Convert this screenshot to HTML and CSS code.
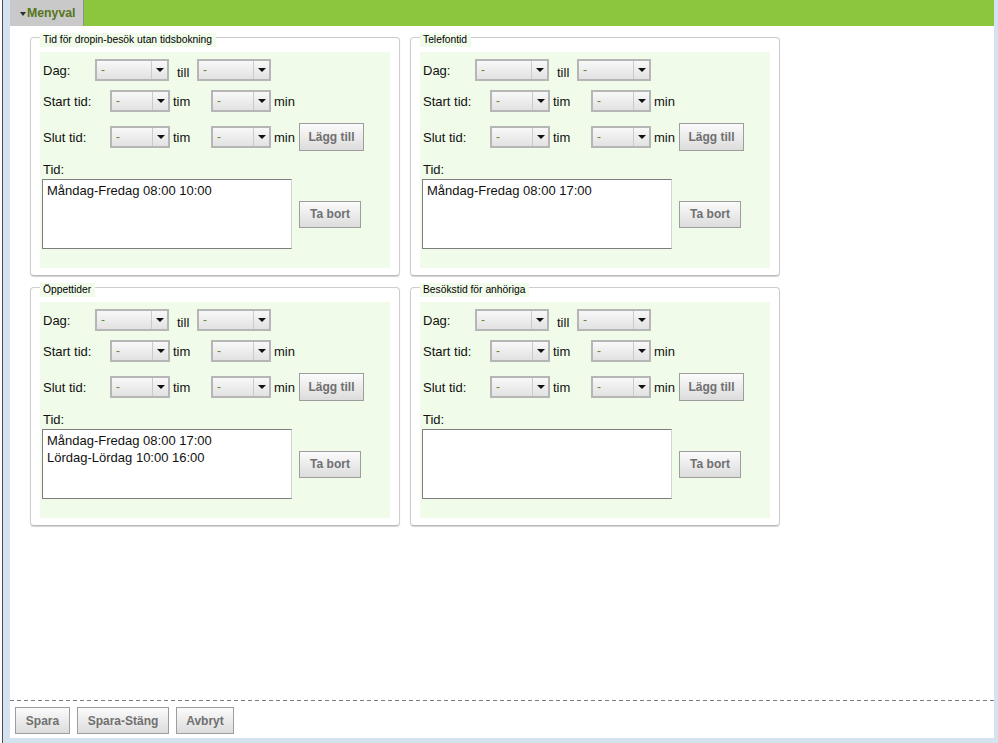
FILE: index.html
```html
<!DOCTYPE html>
<html lang="sv">
<head>
<meta charset="utf-8">
<title>Tider</title>
<link rel="stylesheet" href="styles.css">
</head>
<body>
<div class="frame">
  <div class="window">
    <div class="page">
      <div class="topbar">
        <div class="tab"><span class="caret"></span>Menyval</div>
      </div>
      <div class="content">
        <div class="grid">

          <div class="panel">
            <div class="legend">Tid för dropin-besök utan tidsbokning</div>
            <div class="box">
              <div class="row row-dag">
                <span class="lbl lbl-dag">Dag:</span>
                <div class="sel sel-wide"><span class="val">-</span><span class="arr"></span></div>
                <span class="till">till</span>
                <div class="sel sel-wide"><span class="val">-</span><span class="arr"></span></div>
              </div>
              <div class="row row-time">
                <span class="lbl lbl-time">Start tid:</span>
                <div class="sel"><span class="val">-</span><span class="arr"></span></div>
                <span class="unit unit-tim">tim</span>
                <div class="sel"><span class="val">-</span><span class="arr"></span></div>
                <span class="unit unit-min">min</span>
              </div>
              <div class="row row-time row-slut">
                <span class="lbl lbl-time">Slut tid:</span>
                <div class="sel"><span class="val">-</span><span class="arr"></span></div>
                <span class="unit unit-tim">tim</span>
                <div class="sel"><span class="val">-</span><span class="arr"></span></div>
                <span class="unit unit-min">min</span>
                <button class="btn btn-add">Lägg till</button>
              </div>
              <div class="lbl lbl-tid">Tid:</div>
              <div class="row row-list">
                <div class="list"><div>Måndag-Fredag 08:00 10:00</div></div>
                <button class="btn btn-del">Ta bort</button>
              </div>
            </div>
          </div>

          <div class="panel">
            <div class="legend">Telefontid</div>
            <div class="box">
              <div class="row row-dag">
                <span class="lbl lbl-dag">Dag:</span>
                <div class="sel sel-wide"><span class="val">-</span><span class="arr"></span></div>
                <span class="till">till</span>
                <div class="sel sel-wide"><span class="val">-</span><span class="arr"></span></div>
              </div>
              <div class="row row-time">
                <span class="lbl lbl-time">Start tid:</span>
                <div class="sel"><span class="val">-</span><span class="arr"></span></div>
                <span class="unit unit-tim">tim</span>
                <div class="sel"><span class="val">-</span><span class="arr"></span></div>
                <span class="unit unit-min">min</span>
              </div>
              <div class="row row-time row-slut">
                <span class="lbl lbl-time">Slut tid:</span>
                <div class="sel"><span class="val">-</span><span class="arr"></span></div>
                <span class="unit unit-tim">tim</span>
                <div class="sel"><span class="val">-</span><span class="arr"></span></div>
                <span class="unit unit-min">min</span>
                <button class="btn btn-add">Lägg till</button>
              </div>
              <div class="lbl lbl-tid">Tid:</div>
              <div class="row row-list">
                <div class="list"><div>Måndag-Fredag 08:00 17:00</div></div>
                <button class="btn btn-del">Ta bort</button>
              </div>
            </div>
          </div>

          <div class="panel">
            <div class="legend">Öppettider</div>
            <div class="box">
              <div class="row row-dag">
                <span class="lbl lbl-dag">Dag:</span>
                <div class="sel sel-wide"><span class="val">-</span><span class="arr"></span></div>
                <span class="till">till</span>
                <div class="sel sel-wide"><span class="val">-</span><span class="arr"></span></div>
              </div>
              <div class="row row-time">
                <span class="lbl lbl-time">Start tid:</span>
                <div class="sel"><span class="val">-</span><span class="arr"></span></div>
                <span class="unit unit-tim">tim</span>
                <div class="sel"><span class="val">-</span><span class="arr"></span></div>
                <span class="unit unit-min">min</span>
              </div>
              <div class="row row-time row-slut">
                <span class="lbl lbl-time">Slut tid:</span>
                <div class="sel"><span class="val">-</span><span class="arr"></span></div>
                <span class="unit unit-tim">tim</span>
                <div class="sel"><span class="val">-</span><span class="arr"></span></div>
                <span class="unit unit-min">min</span>
                <button class="btn btn-add">Lägg till</button>
              </div>
              <div class="lbl lbl-tid">Tid:</div>
              <div class="row row-list">
                <div class="list"><div>Måndag-Fredag 08:00 17:00</div><div>Lördag-Lördag 10:00 16:00</div></div>
                <button class="btn btn-del">Ta bort</button>
              </div>
            </div>
          </div>

          <div class="panel">
            <div class="legend">Besökstid för anhöriga</div>
            <div class="box">
              <div class="row row-dag">
                <span class="lbl lbl-dag">Dag:</span>
                <div class="sel sel-wide"><span class="val">-</span><span class="arr"></span></div>
                <span class="till">till</span>
                <div class="sel sel-wide"><span class="val">-</span><span class="arr"></span></div>
              </div>
              <div class="row row-time">
                <span class="lbl lbl-time">Start tid:</span>
                <div class="sel"><span class="val">-</span><span class="arr"></span></div>
                <span class="unit unit-tim">tim</span>
                <div class="sel"><span class="val">-</span><span class="arr"></span></div>
                <span class="unit unit-min">min</span>
              </div>
              <div class="row row-time row-slut">
                <span class="lbl lbl-time">Slut tid:</span>
                <div class="sel"><span class="val">-</span><span class="arr"></span></div>
                <span class="unit unit-tim">tim</span>
                <div class="sel"><span class="val">-</span><span class="arr"></span></div>
                <span class="unit unit-min">min</span>
                <button class="btn btn-add">Lägg till</button>
              </div>
              <div class="lbl lbl-tid">Tid:</div>
              <div class="row row-list">
                <div class="list"></div>
                <button class="btn btn-del">Ta bort</button>
              </div>
            </div>
          </div>

        </div>
      </div>
      <div class="dash"></div>
      <div class="footer">
        <button class="btn btn-foot btn-spara">Spara</button>
        <button class="btn btn-foot btn-stang">Spara-Stäng</button>
        <button class="btn btn-foot btn-avbryt">Avbryt</button>
      </div>
    </div>
  </div>
</div>
</body>
</html>
```

FILE: styles.css
```css
* { box-sizing: border-box; }

html, body {
  margin: 0;
  padding: 0;
}

body {
  width: 998px;
  height: 743px;
  overflow: hidden;
  background: #ffffff;
  font-family: "Liberation Sans", Arial, sans-serif;
  font-size: 13px;
  color: #111111;
}

.frame {
  height: 743px;
  padding-left: 2px;
  display: flex;
}

.window {
  flex: 1;
  display: flex;
  border-left: 1px solid #4d4d4d;
  background: #d5e3f1;
  padding: 0 4px 5px 7px;
}

.page {
  flex: 1;
  display: flex;
  flex-direction: column;
  background: #ffffff;
}

/* top bar */
.topbar {
  height: 26px;
  flex: none;
  display: flex;
  background: #8cc63f;
}

.tab {
  width: 74px;
  display: flex;
  align-items: center;
  padding-left: 10px;
  background: #c9c9c9;
  border-right: 1px solid #8f8f8f;
  font-size: 12.3px;
  font-weight: bold;
  color: #56751a;
}

.caret {
  width: 0;
  height: 0;
  border-top: 4px solid #2e2e2e;
  border-left: 3.5px solid transparent;
  border-right: 3.5px solid transparent;
  margin-right: 1px;
  margin-top: 1px;
}

/* content */
.content {
  flex: 1;
  padding: 11px 0 0 20px;
}

.grid {
  display: grid;
  grid-template-columns: 370px 370px;
  column-gap: 10px;
  row-gap: 11px;
}

.panel {
  border: 1px solid #cdcdcd;
  border-bottom-color: #b9b9b9;
  border-radius: 4px;
  padding: 0 9px 7px;
  box-shadow: 0 1px 1px rgba(0, 0, 0, 0.18);
}

.legend {
  display: table;
  margin: -5px 0 5px 0;
  padding: 0 4px 0 3px;
  height: 14px;
  line-height: 14px;
  background: #f0fbe9;
  font-size: 10.3px;
  color: #000000;
}

.box {
  height: 216px;
  background: #f0fbe9;
  padding-top: 7px;
}

.row {
  display: flex;
  align-items: center;
}

.row-dag {
  height: 22px;
}

.row-time {
  height: 22px;
  margin-top: 9px;
}

.row-slut {
  height: 28px;
  margin-top: 11px;
}

.lbl {
  line-height: 15px;
  white-space: nowrap;
}

.lbl-dag {
  width: 52px;
  margin-left: 3px;
}

.lbl-time {
  width: 67px;
  margin-left: 3px;
}

.lbl-tid {
  margin: 11px 0 2px 3px;
}

.till {
  width: 28px;
  padding-left: 8px;
  margin-top: 5px;
  line-height: 15px;
}

.unit {
  line-height: 15px;
  padding-left: 3px;
}

.unit-tim { width: 41px; }
.unit-min { width: 28px; }

/* select */
.sel {
  width: 60px;
  height: 22px;
  display: flex;
  border: 2px solid #b6b6b6;
  background: linear-gradient(#f8f8f8, #e2e2e2);
}

.sel-wide { width: 74px; }

.sel .val {
  flex: 1;
  padding-left: 4px;
  font-size: 12px;
  line-height: 18px;
  color: #5d8a34;
}

.sel .arr {
  width: 16px;
  border-left: 1px solid #cbcbcb;
  display: flex;
  align-items: center;
  justify-content: center;
}

.sel .arr::after {
  content: "";
  width: 0;
  height: 0;
  border-top: 4px solid #111111;
  border-left: 4px solid transparent;
  border-right: 4px solid transparent;
}

/* buttons */
.btn {
  height: 27px;
  padding: 0;
  border: 1px solid #9d9d9d;
  border-radius: 0;
  background: linear-gradient(#fbfbfb, #dcdcdc);
  font-family: "Liberation Sans", Arial, sans-serif;
  font-size: 12px;
  font-weight: bold;
  color: #707070;
}

.btn-add {
  width: 65px;
  height: 28px;
}

.btn-del {
  width: 62px;
  margin-left: 7px;
}

/* list (textarea) */
.row-list {
  height: 70px;
}

.list {
  width: 250px;
  height: 70px;
  margin-left: 2px;
  padding: 2px 4px;
  background: #ffffff;
  border: 1px solid #7d7d7d;
  border-right-color: #d4d4d4;
  line-height: 17px;
  font-size: 13px;
  color: #111111;
}

/* footer */
.dash {
  height: 1px;
  flex: none;
  background-image: repeating-linear-gradient(to right, #7a7a7a 0 4px, transparent 4px 7px);
}

.footer {
  flex: none;
  display: flex;
  gap: 7px;
  padding: 6px 0 4px 5px;
}

.btn-spara { width: 55px; }
.btn-stang { width: 92px; }
.btn-avbryt { width: 58px; }
```
